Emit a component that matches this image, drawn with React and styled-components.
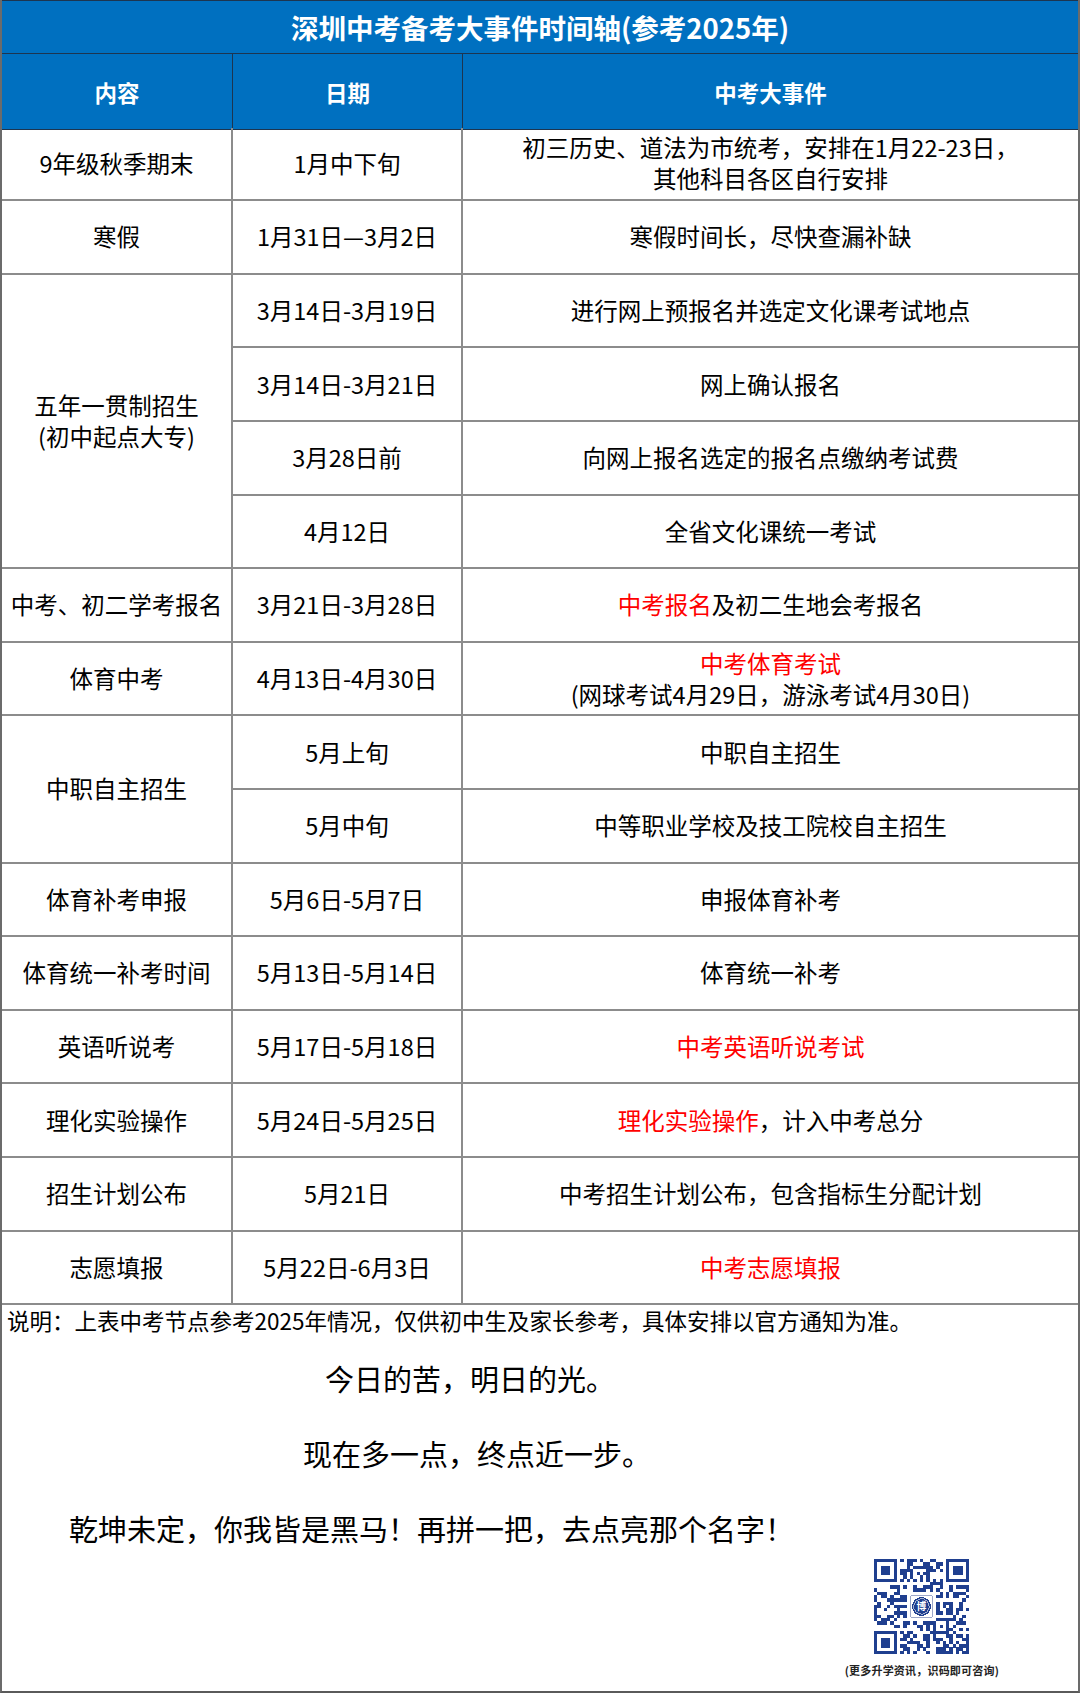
import React from 'react'
import styled, { createGlobalStyle } from 'styled-components'

const GlobalStyle = createGlobalStyle`
  html, body {
    margin: 0;
    padding: 0;
    background: #ffffff;
  }
  body {
    font-family: "Noto Sans CJK SC", "Noto Sans", sans-serif;
    color: #000000;
  }
`

const Page = styled.div`
  width: 1080px;
  height: 1693px;
  box-sizing: border-box;
  display: flex;
  flex-direction: column;
  border-left: 2px solid #6b6b6b;
  border-right: 2px solid #6b6b6b;
  border-bottom: 2px solid #5a5a5a;
`

const TitleBar = styled.div`
  height: 54px;
  flex: none;
  box-sizing: border-box;
  display: flex;
  align-items: center;
  justify-content: center;
  background: #0070c0;
  color: #ffffff;
  font-size: 27.5px;
  font-weight: 700;
  border-top: 1px solid #1d3550;
  border-bottom: 1px solid #1d3550;
`

const Table = styled.div`
  display: grid;
  grid-template-columns: 231px 230px 1fr;
  grid-auto-rows: 73.6px;
  flex: none;
`

const HeadCell = styled.div`
  height: 76px;
  box-sizing: border-box;
  display: flex;
  align-items: center;
  justify-content: center;
  background: #0070c0;
  color: #ffffff;
  font-size: 22.5px;
  font-weight: 700;
  border-right: ${p => (p.$last ? 'none' : '1px solid #1d3550')};
  border-bottom: 1px solid #1d3550;
`

const Cell = styled.div`
  grid-row: ${p => (p.$span ? `span ${p.$span}` : 'auto')};
  box-sizing: border-box;
  display: flex;
  align-items: center;
  justify-content: center;
  text-align: center;
  font-size: 23.5px;
  line-height: 31px;
  border-right: ${p => (p.$last ? 'none' : '2px solid #8c8c8c')};
  border-bottom: 2px solid #8c8c8c;
`

const CellText = styled.div`
  white-space: nowrap;
`

const Red = styled.span`
  color: #ff0000;
`

const Bottom = styled.div`
  flex: 1;
  display: flex;
  flex-direction: column;
  padding: 0 0 6px 5px;
`

const Note = styled.div`
  font-size: 22.5px;
  line-height: 30px;
  white-space: nowrap;
`

const Mottos = styled.div`
  display: flex;
  flex-direction: column;
  gap: 38px;
  margin-top: 25px;
`

const Motto = styled.div`
  font-size: 29px;
  line-height: 37px;
  padding-left: ${p => p.$indent}px;
  white-space: nowrap;
`

const QrBlock = styled.div`
  align-self: flex-end;
  margin-right: 79px;
  margin-top: 12px;
  display: flex;
  flex-direction: column;
  align-items: center;
  gap: 8px;
`

const QrCaption = styled.div`
  font-size: 11px;
  font-weight: 700;
  color: #222222;
  letter-spacing: 0.2px;
`

const rows = [
  { a: '9年级秋季期末', b: '1月中下旬', c: <>初三历史、道法为市统考，安排在1月22-23日，<br />其他科目各区自行安排</> },
  { a: '寒假', b: '1月31日—3月2日', c: '寒假时间长，尽快查漏补缺' },
  { a: <>五年一贯制招生<br />(初中起点大专)</>, span: 4, b: '3月14日-3月19日', c: '进行网上预报名并选定文化课考试地点' },
  { b: '3月14日-3月21日', c: '网上确认报名' },
  { b: '3月28日前', c: '向网上报名选定的报名点缴纳考试费' },
  { b: '4月12日', c: '全省文化课统一考试' },
  { a: '中考、初二学考报名', b: '3月21日-3月28日', c: <><Red>中考报名</Red>及初二生地会考报名</> },
  { a: '体育中考', b: '4月13日-4月30日', c: <><Red>中考体育考试</Red><br />(网球考试4月29日，游泳考试4月30日)</> },
  { a: '中职自主招生', span: 2, b: '5月上旬', c: '中职自主招生' },
  { b: '5月中旬', c: '中等职业学校及技工院校自主招生' },
  { a: '体育补考申报', b: '5月6日-5月7日', c: '申报体育补考' },
  { a: '体育统一补考时间', b: '5月13日-5月14日', c: '体育统一补考' },
  { a: '英语听说考', b: '5月17日-5月18日', c: <Red>中考英语听说考试</Red> },
  { a: '理化实验操作', b: '5月24日-5月25日', c: <><Red>理化实验操作</Red>，计入中考总分</> },
  { a: '招生计划公布', b: '5月21日', c: '中考招生计划公布，包含指标生分配计划' },
  { a: '志愿填报', b: '5月22日-6月3日', c: <Red>中考志愿填报</Red> },
]

// fake QR code: finder patterns + seeded noise, centre left for the logo
const QR_N = 29
function buildQr() {
  let seed = 20250
  const rand = () => {
    seed = (seed * 1103515245 + 12345) % 2147483648
    return seed / 2147483648
  }
  const grid = []
  for (let y = 0; y < QR_N; y++) {
    const row = []
    for (let x = 0; x < QR_N; x++) row.push(rand() > 0.52)
    grid.push(row)
  }
  const finder = (ox, oy) => {
    for (let y = -1; y <= 7; y++) {
      for (let x = -1; x <= 7; x++) {
        const gx = ox + x
        const gy = oy + y
        if (gx < 0 || gy < 0 || gx >= QR_N || gy >= QR_N) continue
        const edge = x === 0 || x === 6 || y === 0 || y === 6
        const core = x >= 2 && x <= 4 && y >= 2 && y <= 4
        grid[gy][gx] = x >= 0 && x <= 6 && y >= 0 && y <= 6 && (edge || core)
      }
    }
  }
  finder(0, 0)
  finder(QR_N - 7, 0)
  finder(0, QR_N - 7)
  for (let i = 8; i < QR_N - 8; i++) {
    grid[6][i] = i % 2 === 0
    grid[i][6] = i % 2 === 0
  }
  const a = QR_N - 9
  for (let y = a - 2; y <= a + 2; y++) {
    for (let x = a - 2; x <= a + 2; x++) {
      const edge = x === a - 2 || x === a + 2 || y === a - 2 || y === a + 2
      grid[y][x] = edge || (x === a && y === a)
    }
  }
  const c = Math.floor(QR_N / 2)
  for (let y = c - 4; y <= c + 4; y++) {
    for (let x = c - 4; x <= c + 4; x++) grid[y][x] = false
  }
  return grid
}
const qrGrid = buildQr()

const QrCode = () => {
  const cells = []
  qrGrid.forEach((row, y) => row.forEach((on, x) => {
    if (on) cells.push(<rect key={`${x}-${y}`} x={x} y={y} width={1.02} height={1.02} />)
  }))
  const m = QR_N / 2
  return (
    <svg width="95" height="95" viewBox={`0 0 ${QR_N} ${QR_N}`} shapeRendering="crispEdges">
      <g fill="#1f3f8f">{cells}</g>
      <rect x={m - 3.4} y={m - 3.4} width="6.8" height="6.8" rx="0.9" fill="#ffffff" stroke="#9aa6c8" strokeWidth="0.3" />
      <circle cx={m} cy={m} r="2.9" fill="#1f3f8f" />
      <circle cx={m} cy={m} r="2.35" fill="none" stroke="#ffffff" strokeWidth="0.18" />
      <text x={m} y={m + 1.1} textAnchor="middle" fontSize="3" fontWeight="700" fill="#ffffff"
        fontFamily="Noto Sans CJK SC, sans-serif">博</text>
    </svg>
  )
}

export default function App() {
  return (
    <>
      <GlobalStyle />
      <Page>
        <TitleBar>深圳中考备考大事件时间轴(参考2025年)</TitleBar>
        <Table>
          <HeadCell>内容</HeadCell>
          <HeadCell>日期</HeadCell>
          <HeadCell $last>中考大事件</HeadCell>
          {rows.map((r, i) => (
            <React.Fragment key={i}>
              {r.a && <Cell $span={r.span}><CellText>{r.a}</CellText></Cell>}
              <Cell><CellText>{r.b}</CellText></Cell>
              <Cell $last><CellText>{r.c}</CellText></Cell>
            </React.Fragment>
          ))}
        </Table>
        <Bottom>
          <Note>说明：上表中考节点参考2025年情况，仅供初中生及家长参考，具体安排以官方通知为准。</Note>
          <Mottos>
            <Motto $indent={318}>今日的苦，明日的光。</Motto>
            <Motto $indent={296}>现在多一点，终点近一步。</Motto>
            <Motto $indent={62}>乾坤未定，你我皆是黑马！再拼一把，去点亮那个名字！</Motto>
          </Mottos>
          <QrBlock>
            <QrCode />
            <QrCaption>(更多升学资讯，识码即可咨询)</QrCaption>
          </QrBlock>
        </Bottom>
      </Page>
    </>
  )
}
